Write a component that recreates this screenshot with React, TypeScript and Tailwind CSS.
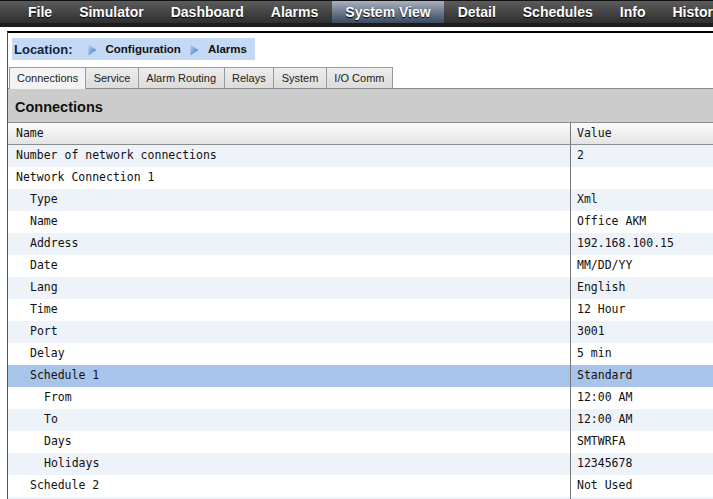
import React from "react";

const navItems = ["File", "Simulator", "Dashboard", "Alarms", "System View", "Detail", "Schedules", "Info", "History"];
const tabs = ["Connections", "Service", "Alarm Routing", "Relays", "System", "I/O Comm"];

type Row = { name: string; value: string; level: number; selected?: boolean };

const rows: Row[] = [
  { name: "Number of network connections", value: "2", level: 0 },
  { name: "Network Connection 1", value: "", level: 0 },
  { name: "Type", value: "Xml", level: 1 },
  { name: "Name", value: "Office AKM", level: 1 },
  { name: "Address", value: "192.168.100.15", level: 1 },
  { name: "Date", value: "MM/DD/YY", level: 1 },
  { name: "Lang", value: "English", level: 1 },
  { name: "Time", value: "12 Hour", level: 1 },
  { name: "Port", value: "3001", level: 1 },
  { name: "Delay", value: "5 min", level: 1 },
  { name: "Schedule 1", value: "Standard", level: 1, selected: true },
  { name: "From", value: "12:00 AM", level: 2 },
  { name: "To", value: "12:00 AM", level: 2 },
  { name: "Days", value: "SMTWRFA", level: 2 },
  { name: "Holidays", value: "12345678", level: 2 },
  { name: "Schedule 2", value: "Not Used", level: 1 },
  { name: "", value: "", level: 1 },
];

const indent = ["pl-[8px]", "pl-[22px]", "pl-[36px]"];

function Arrow() {
  return (
    <svg width="9" height="12" viewBox="0 0 9 12" className="mx-[9px]">
      <defs>
        <linearGradient id="ag" x1="0" y1="0" x2="1" y2="1">
          <stop offset="0" stopColor="#b4d0f4" />
          <stop offset="1" stopColor="#3a76cc" />
        </linearGradient>
      </defs>
      <path d="M0.5 0.5 L8.5 6 L0.5 11.5 Z" fill="url(#ag)" />
    </svg>
  );
}

export default function App() {
  return (
    <div className="w-[713px] h-[499px] overflow-hidden bg-white font-['Liberation_Sans',Arial,sans-serif]">
      {/* top menu */}
      <div className="h-[27px] bg-[#1c1c1c] border-t border-[#111]">
        <div className="h-[22px] flex items-stretch pl-[14.5px] bg-gradient-to-b from-[#5c5c5c] via-[#454545] to-[#2f2f2f] whitespace-nowrap">
          {navItems.map((n) => (
            <div
              key={n}
              className={
                "px-[13.5px] flex items-center text-[14px] font-bold text-white [text-shadow:0_1px_1px_#000] " +
                (n === "System View" ? "bg-gradient-to-b from-[#a9b2bf] via-[#6d7a8c] to-[#3b4a60]" : "")
              }
            >
              {n}
            </div>
          ))}
        </div>
      </div>

      <div className="h-[4px] bg-white" />

      {/* panel */}
      <div className="ml-[7px] border-t-2 border-l border-t-black border-l-[#555] h-[470px]">
        <div className="pl-[4px] pt-[5px]">
          <div className="w-[243px] h-[22px] bg-[#c4d9f3] flex items-center pl-[2px] pt-[1px]">
            <span className="text-[13px] font-bold text-[#13233d]">Location:</span>
            <span className="ml-[6px]"><Arrow /></span>
            <span className="text-[11.5px] font-bold text-[#111]">Configuration</span>
            <Arrow />
            <span className="text-[11.5px] font-bold text-[#111]">Alarms</span>
          </div>
        </div>

        {/* tabs */}
        <div className="mt-[7px] flex items-end h-[22px] pl-[1px] border-b border-[#8a8a8a]">
          {tabs.map((t, i) => (
            <div
              key={t}
              className={
                "h-[21px] flex items-center text-[11px] text-[#222] border-t border-r border-[#9a9a9a] " +
                (i === 0
                  ? "px-[7px] bg-[#f3f3f3] border-l h-[22px] -mb-px"
                  : "px-[7.5px] bg-gradient-to-b from-[#ececec] to-[#dcdcdc]")
              }
            >
              {t}
            </div>
          ))}
        </div>

        {/* section title */}
        <div className="h-[33px] bg-[#cccccc] pl-[7px] pt-[8px]">
          <div className="text-[14.5px] leading-[20px] font-bold text-[#111]">Connections</div>
        </div>

        {/* table */}
        <div className="font-['DejaVu_Sans_Mono',monospace] text-[11.5px] text-[#111]">
          <div className="flex h-[23px] border-t border-b border-[#8c8c8c] bg-gradient-to-b from-[#fbfbfb] to-[#e4e4e4] leading-[20px]">
            <div className="w-[563px] pl-[8px] border-r border-[#777]">Name</div>
            <div className="flex-1 pl-[6px]">Value</div>
          </div>
          {rows.map((r, i) => (
            <div
              key={i}
              className={
                "flex h-[22px] leading-[20px] " +
                (r.selected ? "bg-[#a8c4ea]" : i % 2 === 0 ? "bg-[#eef2f9]" : "bg-white")
              }
            >
              <div className={"w-[563px] border-r border-[#777] whitespace-pre " + indent[r.level]}>{r.name}</div>
              <div className="flex-1 pl-[6px] whitespace-pre">{r.value}</div>
            </div>
          ))}
        </div>
      </div>
    </div>
  );
}
